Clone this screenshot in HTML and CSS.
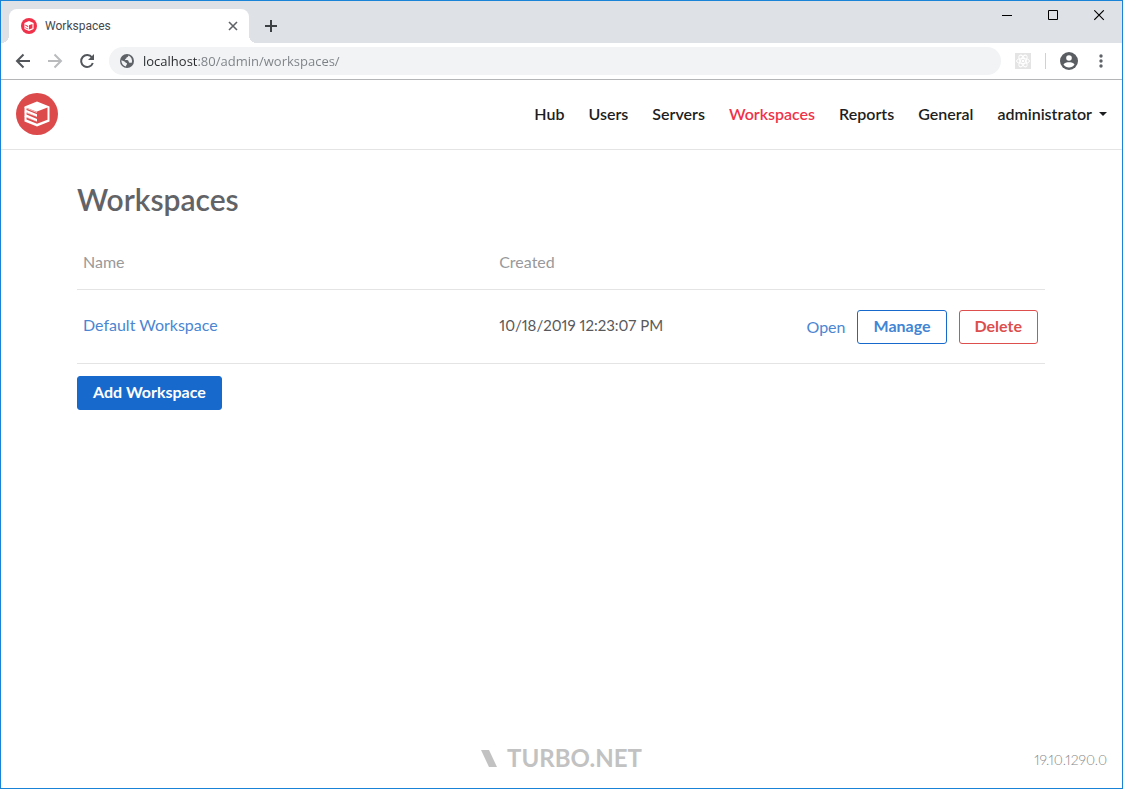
FILE: index.html
```html
<!DOCTYPE html>
<html lang="en">
<head>
<meta charset="utf-8">
<meta name="viewport" content="width=device-width, initial-scale=1">
<title>Workspaces</title>
<link rel="stylesheet" href="styles.css">
</head>
<body>
<div class="window">
  <div class="tab-strip">
    <div class="tab">
      <svg class="tab-icon" width="16" height="16" viewBox="0 0 42 42" aria-hidden="true">
        <circle cx="21" cy="21" r="21" fill="#f0324b"/>
        <path d="M21 8 33 13V29L21 34 9 29V13Z" fill="#fff"/>
        <path d="M21 19 30 16V27L21 30ZM11 17l8 4v3l-8-4ZM11 24l8 4v2l-8-4Z" fill="#f0324b"/>
      </svg>
      <span class="tab-title">Workspaces</span>
      <button class="icon-button tab-close" type="button" aria-label="Close tab">
        <svg width="10" height="10" viewBox="0 0 10 10"><path d="M1 1l8 8M9 1 1 9" stroke="#5f6368" stroke-width="1.600"/></svg>
      </button>
    </div>
    <button class="icon-button new-tab" type="button" aria-label="New tab">
      <svg width="12" height="12" viewBox="0 0 12 12"><path d="M6 0v12M0 6h12" stroke="#3c4043" stroke-width="2"/></svg>
    </button>
    <div class="window-controls">
      <button class="window-button" type="button" aria-label="Minimize">
        <svg width="11" height="11" viewBox="0 0 11 11"><path d="M0 5.500h10" stroke="#000"/></svg>
      </button>
      <button class="window-button" type="button" aria-label="Maximize">
        <svg width="11" height="11" viewBox="0 0 11 11"><path d="M.5.500h9v9h-9Z" fill="none" stroke="#000"/></svg>
      </button>
      <button class="window-button" type="button" aria-label="Close">
        <svg width="11" height="11" viewBox="0 0 11 11"><path d="M.3.300l9.500 9.500M9.800.300l-9.500 9.500" stroke="#000" stroke-width="1.100"/></svg>
      </button>
    </div>
  </div>

  <div class="toolbar">
    <div class="history">
      <button class="icon-button" type="button" aria-label="Back">
        <svg width="16" height="16" viewBox="0 0 16 16" fill="none" stroke="#53575c" stroke-width="2"><path d="M15 8H2M8.500 1.500 2 8l6.500 6.500"/></svg>
      </button>
      <button class="icon-button" type="button" aria-label="Forward">
        <svg width="16" height="16" viewBox="0 0 16 16" fill="none" stroke="#b9bbbd" stroke-width="2"><path d="M1 8h13M7.500 1.500 14 8l-6.500 6.500"/></svg>
      </button>
      <button class="icon-button" type="button" aria-label="Reload">
        <svg width="16" height="16" viewBox="0 0 16 16"><path d="M13 4.500A6 6 0 1 0 13.800 10" fill="none" stroke="#53575c" stroke-width="2"/><path d="M15 1v6H9Z" fill="#53575c"/></svg>
      </button>
    </div>
    <label class="address">
      <svg width="14" height="14" viewBox="0 0 14 14" aria-hidden="true">
        <circle cx="7" cy="7" r="7" fill="#5f6368"/>
        <path d="M8.500 1.600c-.2.900-.5 1.400-1.500 1.600-.7.100-.5 1.200-1.200 1.500-.8.300-.9.900-.4 1.300.7.500 2.400-.1 3 .7.500.800.200 1.900 1.200 2 .9.100 1.300-.2 2 .2A5.700 5.700 0 0 0 8.500 1.600ZM1.400 6.300A5.700 5.700 0 0 0 6 12.600c.3-.8-.1-1.300.6-1.800.7-.6.600-1.500-.2-1.700-1.100-.3-1-.9-1.900-1.500Z" fill="#f1f3f4"/>
      </svg>
      <input class="address-input" type="text" aria-label="Address" value="localhost:80/admin/workspaces/">
    </label>
    <div class="toolbar-actions">
      <button class="icon-button" type="button" aria-label="React developer tools">
        <svg width="16" height="16" viewBox="0 0 16 16"><path d="M0 0h16v16H0Z" fill="#e4e4e4"/><g fill="none" stroke="#fff" stroke-width="1"><ellipse cx="8" cy="8" rx="6.500" ry="2.600"/><ellipse cx="8" cy="8" rx="6.500" ry="2.600" transform="rotate(60 8 8)"/><ellipse cx="8" cy="8" rx="6.500" ry="2.600" transform="rotate(120 8 8)"/></g><circle cx="8" cy="8" r="1.300" fill="#fff"/></svg>
      </button>
      <span class="divider"></span>
      <button class="icon-button" type="button" aria-label="Profile">
        <svg width="18" height="18" viewBox="0 0 18 18"><circle cx="9" cy="9" r="9" fill="#5a5e63"/><circle cx="9" cy="6" r="2.800" fill="#fff"/><path d="M3.500 12.500C4 10.800 7 10.300 9 10.300s5 .5 5.500 2.200a6.500 6.500 0 0 1-11 0Z" fill="#fff"/></svg>
      </button>
      <button class="icon-button" type="button" aria-label="Menu">
        <svg width="4" height="14" viewBox="0 0 4 14" fill="#5f6368"><circle cx="2" cy="2" r="1.700"/><circle cx="2" cy="7" r="1.700"/><circle cx="2" cy="12" r="1.700"/></svg>
      </button>
    </div>
  </div>

  <header class="site-header">
    <a class="brand" href="#" aria-label="Home">
      <svg width="42" height="42" viewBox="0 0 42 42">
        <circle cx="21" cy="21" r="21" fill="#dc4a4b"/>
        <path d="M21 8.500 33.500 13.500V28.500L21 33.500 8.500 28.500V13.500Z" fill="#fff"/>
        <path d="M21 18.500 31.500 14.500V26.700L21 30.800ZM10.500 14.700 21 18.800V21.300L10.500 17ZM10.500 19.300 21 23.600V26L10.500 21.600ZM10.500 24 21 28.300V30.800L10.500 26.500Z" fill="#dc4a4b"/>
        <path d="M8.500 14.500 21 19.500M8.500 19 21 23.500M8.500 23.500 21 28.300" stroke="#fff" stroke-width=".6"/>
      </svg>
    </a>
    <nav class="site-nav" aria-label="Main">
      <a href="#">Hub</a>
      <a href="#">Users</a>
      <a href="#">Servers</a>
      <a class="active" href="#" aria-current="page">Workspaces</a>
      <a href="#">Reports</a>
      <a href="#">General</a>
      <button class="account" type="button">administrator<span class="caret"></span></button>
    </nav>
  </header>

  <main class="content">
    <h1>Workspaces</h1>
    <table class="workspaces">
      <thead>
        <tr><th class="name-column" scope="col">Name</th><th scope="col">Created</th><td></td></tr>
      </thead>
      <tbody>
        <tr>
          <td><a href="#">Default Workspace</a></td>
          <td class="date-cell">10/18/2019 12:23:07 PM</td>
          <td class="actions-cell">
            <div class="row-actions">
              <a href="#">Open</a>
              <button class="button manage" type="button">Manage</button>
              <button class="button delete" type="button">Delete</button>
            </div>
          </td>
        </tr>
      </tbody>
    </table>
    <button class="button add" type="button">Add Workspace</button>
  </main>

  <footer class="site-footer">
    <div class="wordmark">
      <svg width="16" height="17" viewBox="0 0 16 17" aria-hidden="true"><path d="M0 0h8l8 17H8Z" fill="#c2c2c2"/></svg>
      <span>TURBO.NET</span>
    </div>
    <span class="version">19.10.1290.0</span>
  </footer>
</div>
</body>
</html>
```
FILE: styles.css
```css
* { box-sizing: border-box; }

body {
  margin: 0;
  font-family: Lato, "Open Sans", sans-serif;
  font-size: 16px;
  line-height: 20px;
  font-variant-numeric: proportional-nums;
  color: #58595b;
}

a { color: #4a86d2; text-decoration: none; }

button, input { font: inherit; }

svg { display: block; }

.window {
  display: flex;
  flex-direction: column;
  min-height: 100vh;
  border: 1px solid #1883d7;
  background: #fff;
}

.icon-button {
  display: flex;
  align-items: center;
  justify-content: center;
  padding: 0;
  border: 0;
  background: none;
}

/* Browser chrome */
.tab-strip {
  display: flex;
  align-items: flex-end;
  height: 42px;
  padding-left: 8px;
  background: #dee1e6;
}

.tab {
  position: relative;
  display: flex;
  align-items: center;
  gap: 8px;
  width: 240px;
  height: 34px;
  padding: 0 11px 0 12px;
  border-radius: 8px 8px 0 0;
  background: #fff;
  font: 12px/16px Roboto, sans-serif;
  color: #45494d;
}

.tab::before,
.tab::after {
  content: "";
  position: absolute;
  bottom: 0;
  width: 8px;
  height: 8px;
}

.tab::before {
  right: 100%;
  background: radial-gradient(circle at 0 0, #dee1e6 8px, #fff 8px);
}

.tab::after {
  left: 100%;
  background: radial-gradient(circle at 100% 0, #dee1e6 8px, #fff 8px);
}

.tab-title { flex: 1; }

.new-tab { width: 44px; height: 34px; }

.window-controls {
  display: flex;
  align-self: flex-start;
  margin-left: auto;
}

.window-button {
  display: flex;
  align-items: center;
  justify-content: center;
  width: 46px;
  height: 29px;
  padding: 0;
  border: 0;
  background: none;
}

.toolbar {
  display: flex;
  align-items: center;
  gap: 14px;
  height: 37px;
  padding: 0 19px 0 14px;
  border-bottom: 1px solid #b4b5b6;
}

.history { display: flex; gap: 16px; }

.address {
  display: flex;
  flex: 1;
  align-items: center;
  gap: 9px;
  height: 28px;
  padding: 0 11px;
  border-radius: 14px;
  background: #f1f3f4;
}

.address-input {
  flex: 1;
  min-width: 0;
  height: 20px;
  padding: 0;
  border: 0;
  outline: 0;
  background: linear-gradient(90deg, #26282b 55px, #7c8085 55px);
  -webkit-background-clip: text;
  background-clip: text;
  -webkit-text-fill-color: transparent;
  font: 13px/20px "Open Sans", sans-serif;
}

.toolbar-actions { display: flex; align-items: center; gap: 14px; }

.divider { width: 1px; height: 16px; background: #cfd1d3; }

.toolbar-actions .icon-button:last-child { margin-left: 7px; }

/* Site */
.site-header {
  display: flex;
  align-items: center;
  justify-content: space-between;
  height: 70px;
  padding: 0 15px 2px;
  border-bottom: 1px solid #e4e4e4;
}

.site-nav {
  display: flex;
  align-items: center;
  gap: 24px;
  font-weight: 600;
}

.site-nav a,
.account { color: #1d1e20; }

.site-nav .active { color: #f0324b; }

.account {
  display: flex;
  align-items: center;
  gap: 7px;
  padding: 0;
  border: 0;
  background: none;
}

.caret {
  border: 4px solid transparent;
  border-top-color: currentColor;
  border-bottom: 0;
}

.content { flex: 1; padding: 31px 77px 0 76px; }

h1 {
  margin: 0;
  font-size: 30px;
  line-height: 36px;
  font-weight: 600;
  color: #626366;
}

.workspaces {
  width: 100%;
  margin: 18px 0 12px;
  border-collapse: collapse;
  table-layout: fixed;
  text-align: left;
}

.workspaces th,
.workspaces td {
  padding: 0 6px 2px;
  border-bottom: 1px solid #e4e4e4;
}

.workspaces th {
  height: 54px;
  padding-bottom: 0;
  font-weight: 400;
  color: #98999b;
}

.workspaces td { height: 74px; }

.workspaces .date-cell { font-size: 15px; }

.workspaces .actions-cell { padding: 1px 7px 0; }

.workspaces thead td { height: 54px; }

.name-column { width: 43%; }

.row-actions {
  display: flex;
  align-items: center;
  justify-content: flex-end;
  gap: 12px;
}

.button {
  height: 34px;
  padding: 0 15px 1px;
  border: 1px solid;
  border-radius: 3px;
  background: #fff;
  font-weight: 700;
}

.manage { border-color: #176acc; color: #4285d4; }

.delete { border-color: #dc4f4c; color: #dc4f4c; }

.add { border-color: #176acc; background: #176acc; color: #fff; }

.site-footer {
  display: grid;
  grid-template-columns: 1fr auto 1fr;
  align-items: center;
  padding: 0 15px 16px;
}

.wordmark {
  display: flex;
  grid-column: 2;
  align-items: center;
  gap: 10px;
  font: 700 24px/28px Lato, sans-serif;
  color: #c2c2c2;
}

.version {
  justify-self: end;
  padding-top: 4px;
  font-size: 14px;
  font-weight: 300;
  color: #888;
}
```
